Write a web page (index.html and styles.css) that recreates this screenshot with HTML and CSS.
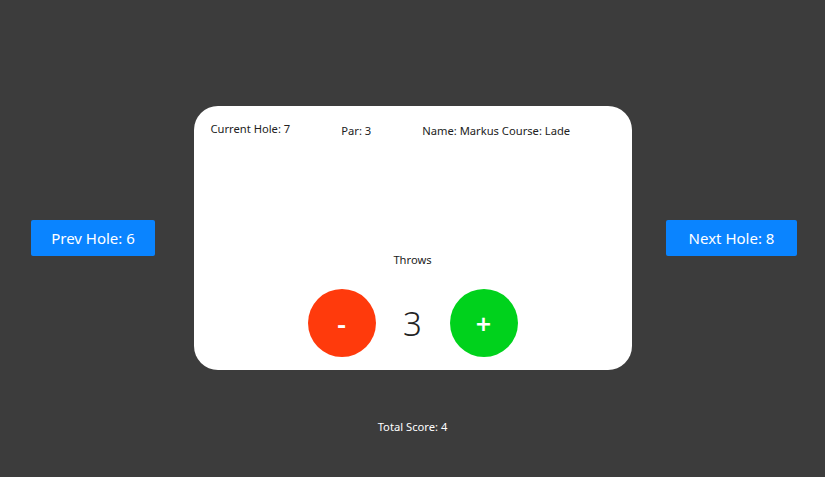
FILE: index.html
```html
<!DOCTYPE html>
<html>
<head>
<meta charset="utf-8">
<link rel="stylesheet" href="styles.css">
</head>
<body>
<div class="page">
  <div class="row">
    <button class="nav nav-prev">Prev Hole: 6</button>
    <div class="card">
      <div class="info">
        <span>Current Hole: 7</span>
        <span>Par: 3</span>
        <span>Name: Markus Course: Lade</span>
      </div>
      <div class="throws">
        <div class="label">Throws</div>
        <div class="counter">
          <button class="round minus">-</button>
          <span class="count">3</span>
          <button class="round plus">+</button>
        </div>
      </div>
    </div>
    <button class="nav nav-next">Next Hole: 8</button>
  </div>
  <div class="total">Total Score: 4</div>
</div>
</body>
</html>
```
FILE: styles.css
```css
html, body {
  margin: 0;
  padding: 0;
  background: #3c3c3c;
  font-family: "Noto Sans", "Open Sans", sans-serif;
}
.page {
  width: 825px;
  height: 477px;
  padding-top: 106px;
  box-sizing: border-box;
}
.row {
  display: grid;
  grid-template-columns: 1fr auto 1fr;
  align-items: center;
}
.nav {
  background: #0a84ff;
  color: #ffffff;
  border: none;
  border-radius: 2px;
  height: 36px;
  font-family: inherit;
  font-size: 15px;
  padding: 0;
}
.nav-prev {
  justify-self: start;
  margin-left: 31px;
  width: 124px;
}
.nav-next {
  justify-self: end;
  margin-right: 28px;
  width: 131px;
}
.card {
  width: 438px;
  height: 264px;
  background: #ffffff;
  border-radius: 24px;
  box-sizing: border-box;
  padding: 15px 17px 13px;
  display: flex;
  flex-direction: column;
  justify-content: space-between;
}
.info {
  display: flex;
  gap: 51px;
  font-size: 11.2px;
  color: #222222;
  line-height: 16px;
}
.info span:nth-child(2) {
  margin-top: 2px;
}
.info span:nth-child(3) {
  margin-top: 2px;
}
.throws {
  display: flex;
  flex-direction: column;
  align-items: center;
}
.label {
  font-size: 11.2px;
  color: #222222;
  line-height: 16px;
  margin-bottom: 21px;
}
.counter {
  display: flex;
  align-items: center;
  gap: 27px;
}
.round {
  width: 68px;
  height: 68px;
  border-radius: 50%;
  border: none;
  color: #ffffff;
  font-family: inherit;
  font-size: 27px;
  font-weight: 600;
  padding: 0;
  line-height: 1;
}
.minus {
  background: #ff3a0c;
}
.plus {
  background: #00d21c;
}
.count {
  font-size: 33px;
  color: #222222;
  font-weight: 300;
  width: 20px;
  text-align: center;
}
.total {
  margin-top: 49px;
  text-align: center;
  color: #ffffff;
  font-size: 11.2px;
  line-height: 16px;
}
```
